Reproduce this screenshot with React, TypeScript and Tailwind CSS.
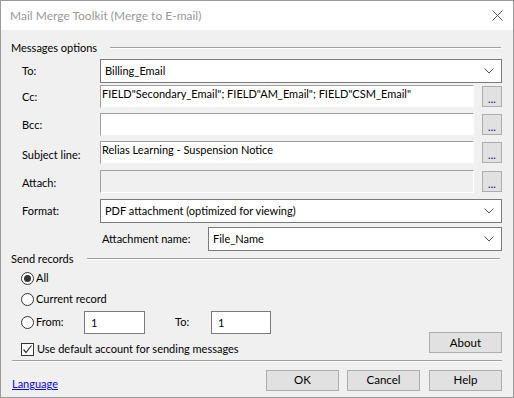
import React from "react";

const font = { fontFamily: 'Lato, "Noto Sans", sans-serif' };

function Chevron() {
  return (
    <svg width="10" height="6" viewBox="0 0 10 6" className="shrink-0">
      <path d="M0.5 0.5 L5 5 L9.5 0.5" fill="none" stroke="#505050" strokeWidth="1" />
    </svg>
  );
}

function Combo({ value, className = "" }: { value: string; className?: string }) {
  return (
    <div className={`h-[24px] bg-white border border-[#7a7a7a] flex items-center pl-[4px] pr-[7px] ${className}`}>
      <span className="flex-1 text-[11px] leading-[16px] text-black">{value}</span>
      <Chevron />
    </div>
  );
}

function TextBox({ value = "", disabled = false }: { value?: string; disabled?: boolean }) {
  return (
    <div
      className={`w-[374px] h-[23px] border-t border-l border-[#a0a0a0] border-r border-b ${
        disabled ? "bg-[#f0f0f0] border-r-[#ffffff] border-b-[#ffffff]" : "bg-white border-r-[#ffffff] border-b-[#f0f0f0]"
      } text-[11px] text-black leading-[14px] pl-[1px] pt-[1px]`}
    >
      {value}
    </div>
  );
}

function DotsButton() {
  return (
    <div className="w-[20px] h-[21px] bg-[#e1e1e1] border border-[#adadad] flex items-end justify-center text-[11px] leading-[14px] text-[#10105a] ml-[8px]">
      ...
    </div>
  );
}

function Row({ label, children, mt, labelOffset = 0 }: { label: string; children: React.ReactNode; mt: string; labelOffset?: number }) {
  return (
    <div className={`flex items-center ${mt}`}>
      <div className="w-[89px] pl-[11px] text-[11px] leading-[16px] text-black" style={{ marginTop: labelOffset }}>
        {label}
      </div>
      {children}
    </div>
  );
}

function Radio({ checked = false }: { checked?: boolean }) {
  return (
    <div className="w-[13px] h-[13px] rounded-full border border-[#333333] bg-white flex items-center justify-center mr-[2px] shrink-0">
      {checked && <div className="w-[7px] h-[7px] rounded-full bg-[#333333]" />}
    </div>
  );
}

function Btn({ label, className = "" }: { label: string; className?: string }) {
  return (
    <div className={`w-[73px] h-[21px] bg-[#e1e1e1] border border-[#adadad] flex items-center justify-center text-[11.5px] leading-[16px] text-black ${className}`}>
      {label}
    </div>
  );
}

export default function App() {
  return (
    <div className="w-[514px] h-[398px] bg-[#f0f0f0] border border-[#9a9a9a] flex flex-col overflow-hidden leading-[16px]" style={font}>
      {/* Title bar */}
      <div className="h-[29px] bg-white flex items-center justify-between pl-[9px] pr-[10px] shrink-0">
        <span className="text-[12px] text-[#999999]">Mail Merge Toolkit (Merge to E-mail)</span>
        <svg width="11" height="11" viewBox="0 0 11 11">
          <path d="M0.5 0.5 L10.5 10.5 M10.5 0.5 L0.5 10.5" stroke="#555555" strokeWidth="1" />
        </svg>
      </div>

      <div className="pl-[10px] pr-[11px] flex flex-col">
        {/* Messages options header */}
        <div className="flex items-center mt-[10px] h-[16px]">
          <span className="text-[11px] text-black">Messages options</span>
          <div className="flex-1 ml-[13px] mr-[1px] h-px bg-[#a0a0a0] border-b border-white box-content" />
        </div>

        <Row label="To:" mt="mt-[3px]">
          <Combo value="Billing_Email" className="w-[402px]" />
        </Row>
        <Row label="Cc:" mt="mt-[2px]" labelOffset={1}>
          <TextBox value={'FIELD"Secondary_Email"; FIELD"AM_Email"; FIELD"CSM_Email"'} />
          <DotsButton />
        </Row>
        <Row label="Bcc:" mt="mt-[5px]" labelOffset={1}>
          <TextBox />
          <DotsButton />
        </Row>
        <Row label="Subject line:" mt="mt-[5px]" labelOffset={5}>
          <TextBox value="Relias Learning - Suspension Notice" />
          <DotsButton />
        </Row>
        <Row label="Attach:" mt="mt-[6px]" labelOffset={2}>
          <TextBox disabled />
          <DotsButton />
        </Row>
        <Row label="Format:" mt="mt-[6px]">
          <Combo value="PDF attachment (optimized for viewing)" className="w-[402px]" />
        </Row>
        <div className="flex items-center mt-[4px]">
          <div className="w-[197px] pl-[91px] text-[11px] text-black">Attachment name:</div>
          <Combo value="File_Name" className="w-[294px]" />
        </div>

        {/* Send records header */}
        <div className="flex items-center h-[16px]">
          <span className="text-[11px] text-black">Send records</span>
          <div className="flex-1 ml-[13px] mr-[2px] h-px bg-[#a0a0a0] border-b border-white box-content" />
        </div>

        <div className="flex">
          <div className="flex flex-col pl-[10px]">
            <div className="flex items-center mt-[2px] h-[18px] text-[11px] text-black">
              <Radio checked />
              <span>All</span>
            </div>
            <div className="flex items-center mt-[3px] h-[18px] text-[11px] text-black">
              <Radio />
              <span>Current record</span>
            </div>
            <div className="flex items-center mt-[3px] h-[23px] text-[11px] text-black">
              <div className="flex items-center self-start mt-[3px]">
                <Radio />
                <span className="w-[48px]">From:</span>
              </div>
              <div className="w-[61px] h-[23px] bg-white border border-[#7a7a7a] flex items-center pl-[6px]">1</div>
              <span className="ml-[30px] w-[36px] self-start mt-[3px]">To:</span>
              <div className="w-[60px] h-[23px] bg-white border border-[#7a7a7a] flex items-center pl-[6px]">1</div>
            </div>
            <div className="flex items-center mt-[8px] h-[14px] text-[11px] text-black">
              <div className="w-[13px] h-[13px] border border-[#333333] bg-white mr-[3px] flex items-center justify-center">
                <svg width="11" height="11" viewBox="0 0 11 11">
                  <path d="M1.5 5.5 L4 8.5 L9.5 1.5" fill="none" stroke="#333333" strokeWidth="1.2" />
                </svg>
              </div>
              <span>Use default account for sending messages</span>
            </div>
          </div>
          <div className="flex-1 flex justify-end items-end pb-[3px]">
            <Btn label="About" />
          </div>
        </div>

        <div className="mt-[4px] ml-[1px] h-px bg-[#a0a0a0] border-b border-white box-content" />

        <div className="flex items-center mt-[6px]">
          <span className="flex-1 pl-[1px] pt-[8px] text-[11px] text-[#0000ff] underline">Language</span>
          <Btn label="OK" />
          <Btn label="Cancel" className="ml-[8px]" />
          <Btn label="Help" className="ml-[9px]" />
        </div>
      </div>
    </div>
  );
}
